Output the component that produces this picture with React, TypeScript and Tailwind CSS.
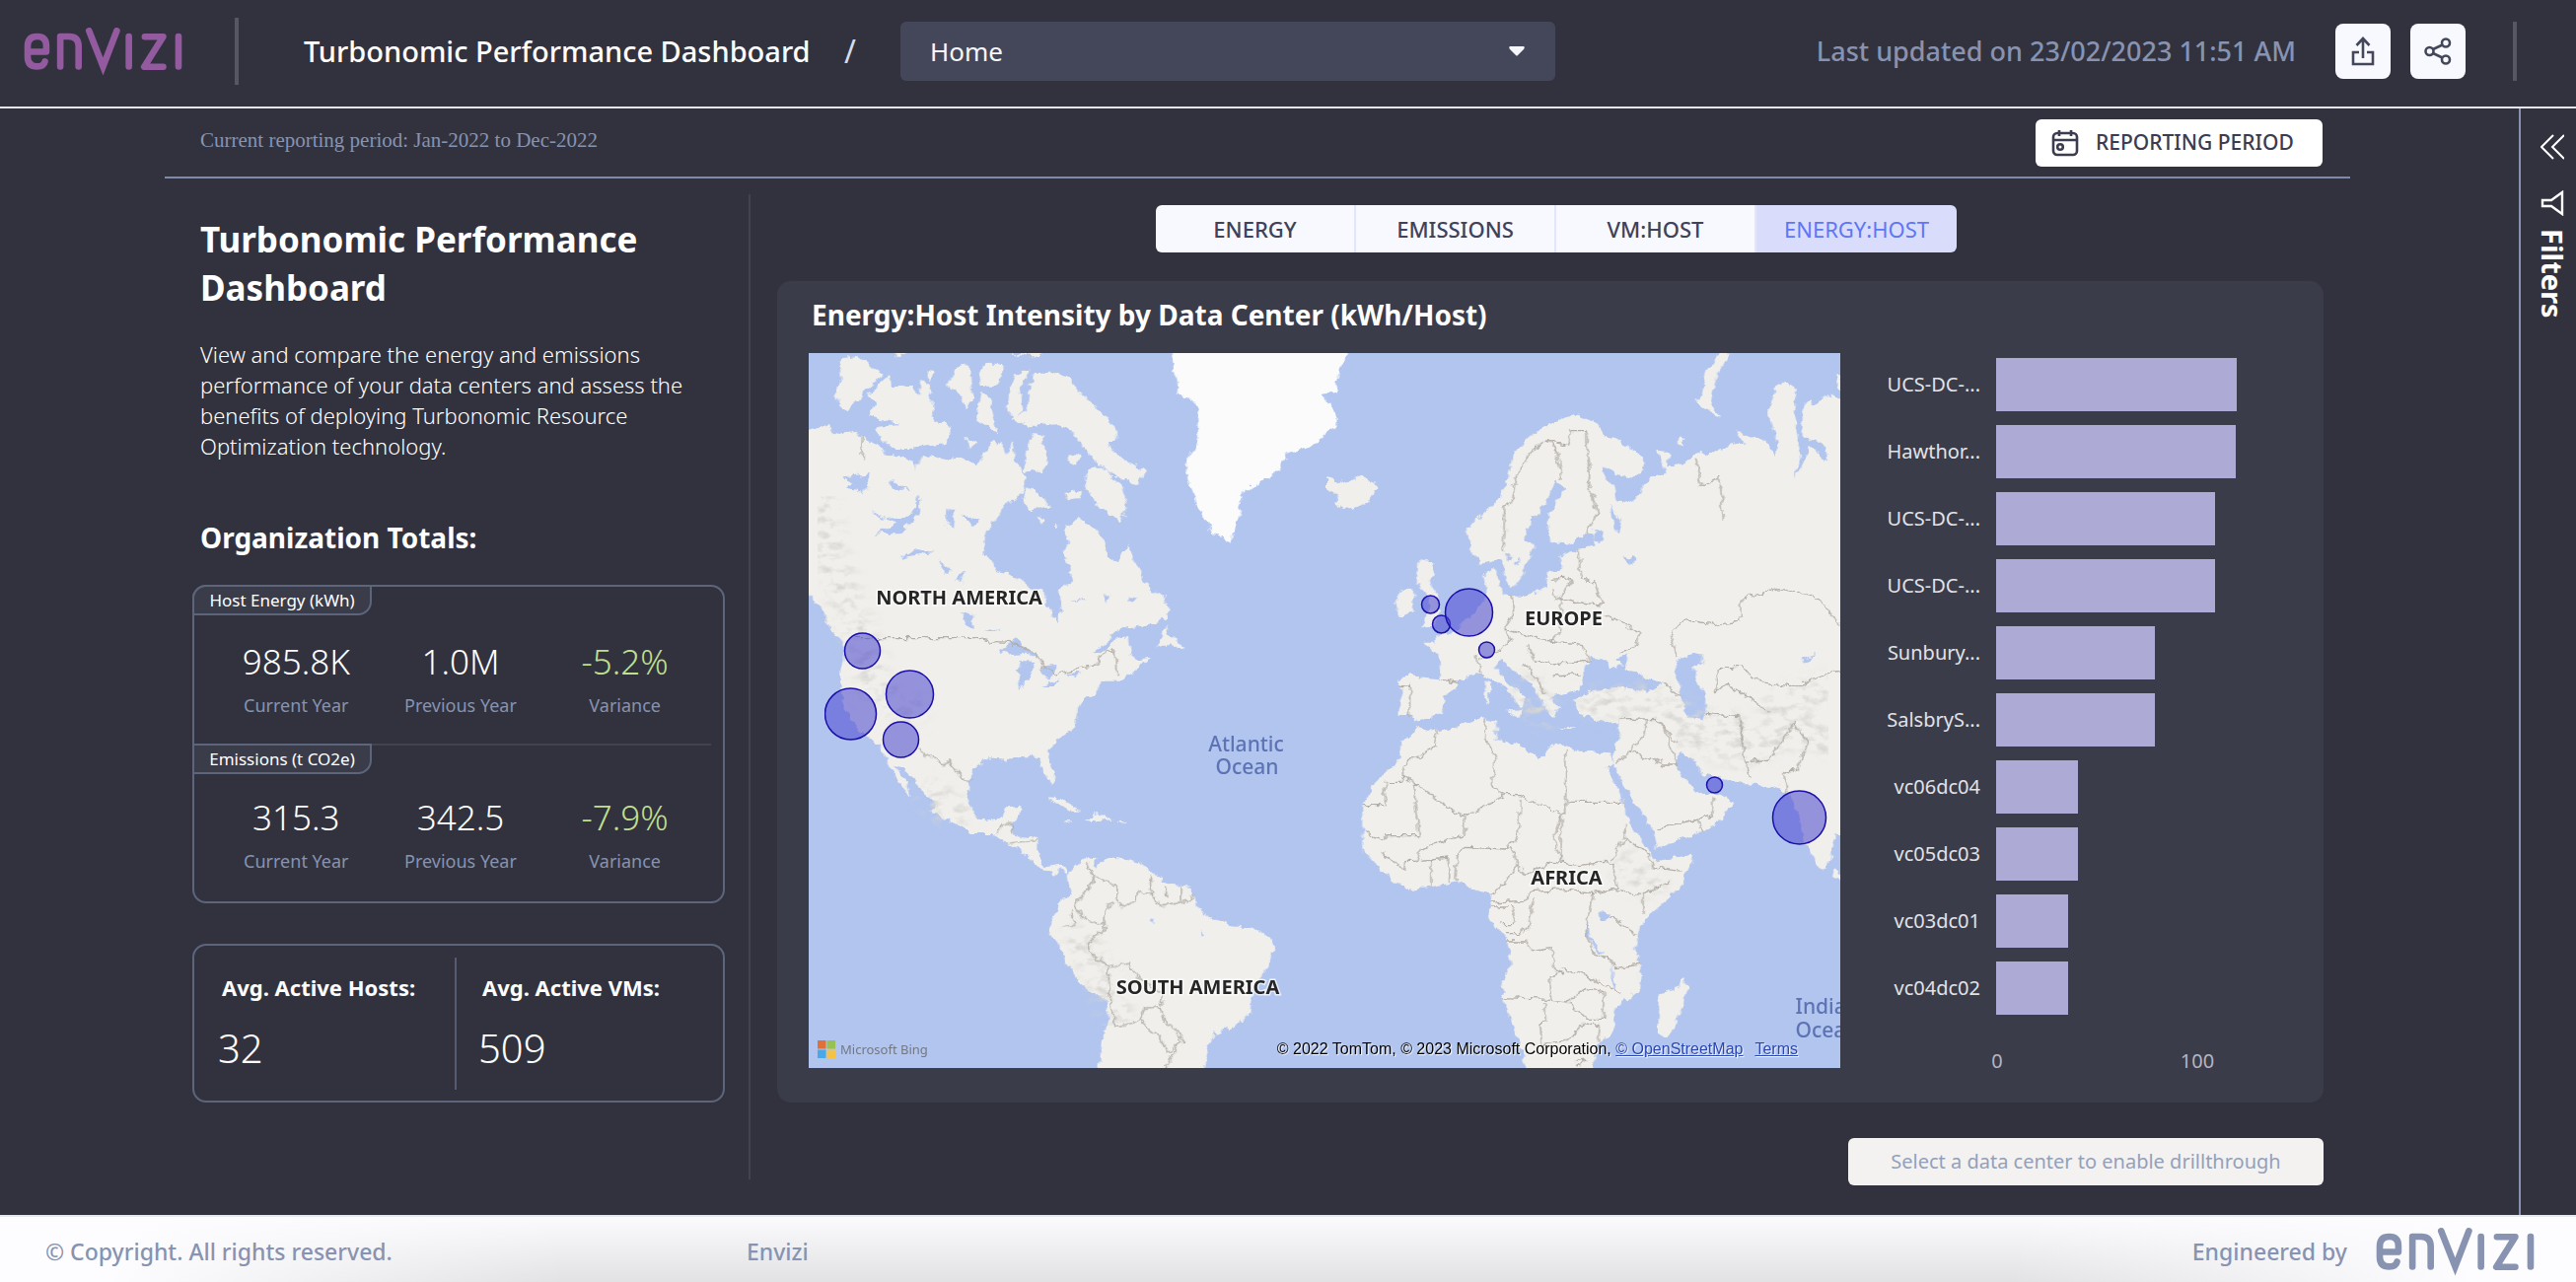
import React from "react";

const sans = "font-['Noto_Sans','Open_Sans',sans-serif]";

function Logo({ className }: { className: string }) {
  return (
    <svg viewBox="778 313 482 148" className={className} fill="none" stroke="currentColor" strokeWidth="20" strokeLinecap="round" strokeLinejoin="round" role="img" aria-label="Envizi">
      <path d="M790 387H845V368Q845 340 817 340Q788 340 788 370V402Q788 432 817 432Q838 432 841 417" />
      <path d="M888 432V340H914Q944 340 944 370V432" />
      <path d="M976 323L1019 432L1061 323" strokeLinejoin="miter" strokeMiterlimit="6" />
      <path d="M1098 340V432M1250 340V432" />
      <path d="M1147 341H1203L1145 433H1203" />
    </svg>
  );
}

function ExportIcon() {
  return (
    <svg viewBox="0 0 24 30" className="h-[30px] w-6" fill="none" stroke="currentColor" strokeWidth="2.6">
      <path d="M12 22V2M5.500 9L12 2L18.500 9M8 16H2V28H22V16H16" />
    </svg>
  );
}

function ShareIcon() {
  return (
    <svg viewBox="0 0 28 28" className="size-7" fill="none" stroke="currentColor" strokeWidth="2.6">
      <circle cx="5.500" cy="14" r="4" />
      <circle cx="22" cy="5.500" r="4" />
      <circle cx="22" cy="22.500" r="4" />
      <path d="M9 12L18.500 7.500M9 16L18.500 20.500" />
    </svg>
  );
}

function CalendarIcon() {
  return (
    <svg viewBox="0 0 28 28" className="size-7" fill="none" stroke="currentColor" strokeWidth="2.6">
      <rect x="2" y="4" width="24" height="22" rx="4" />
      <path d="M2 11H26M8 1V7M20 1V7" />
      <circle cx="9" cy="18" r="2.800" />
    </svg>
  );
}

const arcticIslands = [
  "M200 285L250 275L325 330L280 370L225 440L185 400L205 340Z",
  "M280 390L340 335L350 370L410 365L430 400L430 345L455 355L470 470L520 490L500 540L400 555L350 555L300 500L310 485L370 480L285 455L305 420Z",
  "M525 310L570 300L575 370L580 400L555 430L540 385L505 360Z",
  "M600 310L620 295L670 305L650 365L605 365Z",
  "M605 380L625 400L650 510L590 470Z",
  "M745 312L700 330L682 380L680 430L690 465L725 440L715 400L720 350Z",
  "M760 320L800 320L855 340L870 370L930 430L990 500L990 540L960 540L1000 580L1070 625L1045 670L960 625L900 560L860 500L820 480L740 490L685 465L735 440L740 360Z",
  "M905 620L940 610L1000 660L1020 730L995 780L950 740L900 680Z",
  "M840 690L890 680L880 705L850 710Z",
  "M730 560L750 510L780 520L790 600L770 630L725 620Z",
  "M730 670L760 690L800 730L740 745L722 720Z",
  "M860 570L885 580L870 605L850 595Z",
  "M765 762L785 770L770 782ZM812 780L822 790L814 800ZM560 520L595 540L570 555ZM445 320L472 325L455 348Z",
  "M340 262L400 262L365 280ZM680 262L800 262L760 276Z",
  "M1100 1160L1130 1090L1140 1120L1185 1170L1160 1165L1140 1150Z",
];

const northAmerica =
  "M100 500L160 485L200 515L240 500L280 530L320 545L335 575L400 585L420 615L440 570L500 590L555 580L590 605L605 580L640 530L665 545L675 580L690 530L700 590L735 640L720 690L690 715L660 740L640 775L615 810L610 880L635 900L650 930L690 940L740 975L780 985L790 1030L820 1085L832 1050L825 990L860 960L860 920L835 880L850 840L840 790L880 770L920 790L950 830L960 880L990 900L1020 850L1040 900L1060 940L1080 980L1120 1010L1140 1050L1130 1070L1080 1090L1010 1100L975 1120L950 1150L920 1180L950 1170L990 1130L1020 1125L1025 1180L1060 1200L1085 1195L1034 1232L1000 1262L205 1262L205 1230L215 1160L200 1130L165 1085L150 1040L100 990Z";

const greenland =
  "M1140 250L1165 390L1215 420L1220 520L1185 600L1190 650L1230 760L1260 810L1310 840L1330 780L1350 680L1440 630L1475 570L1540 550L1610 490L1610 450L1570 390L1610 380L1615 320L1655 250Z";

const centralAmerica =
  "M121 -6L118 40L125 90L150 150L190 200L230 230L250 270L275 320L300 360L320 382L305 330L275 285L290 290L330 330L350 370L385 400L380 430L430 460L500 495L545 495L600 530L640 550L660 580L700 605L725 620L745 604L765 622L765 600L740 588L700 595L680 560L680 510L610 500L600 470L625 450L632 410L590 415L580 445L530 460L500 440L480 390L485 340L495 300L530 270L590 275L600 262L650 262L685 270L695 310L720 350L730 330L715 280L710 240L740 210L785 170L790 130L810 90L855 60L860 30L950 -6Z";

const southAmerica =
  "M765 620L770 680L735 720L720 760L715 800L745 840L760 890L800 950L870 1000L880 1060L865 1120L850 1230L1150 1230L1160 1150L1180 1105L1260 1070L1285 1040L1290 980L1330 900L1352 850L1345 815L1290 780L1220 770L1190 750L1150 745L1120 690L1115 660L1060 650L1010 620L975 585L880 565L845 600L845 565L800 575Z";

const eurasia =
  "M670 270L750 240L805 265L830 300L870 315L940 370L945 410L905 440L830 400L835 430L860 465L870 500L900 510L935 480L960 430L1005 420L985 350L1020 355L1010 400L1060 390L1100 350L1130 360L1200 330L1225 330L1210 290L1290 320L1320 370L1325 330L1300 235L1320 160L1350 140L1380 165L1370 235L1390 370L1370 430L1395 400L1410 330L1450 370L1465 380L1455 330L1395 310L1395 220L1415 195L1460 240L1430 210L1470 180L1520 200L1520 1260L870 1260L885 1200L880 1175L820 1180L760 1150L745 1110L800 1080L870 1070L950 1085L1000 1060L950 1040L890 1010L900 970L860 985L885 1000L850 1015L830 985L795 980L770 1030L765 1080L720 1090L680 1100L705 1130L690 1165L660 1130L640 1080L600 1040L545 990L520 1010L560 1060L610 1105L595 1135L560 1080L500 1040L470 1030L410 1050L420 1070L380 1100L370 1150L300 1175L285 1155L250 1155L265 1090L245 1050L265 1035L365 1045L365 990L350 960L315 935L350 935L370 905L400 910L440 870L500 790L490 730L520 705L540 760L545 790L590 795L640 780L665 770L670 720L715 715L705 670L760 650L810 640L800 610L760 610L735 635L680 630L670 560L700 500L720 460L690 445L665 520L620 560L610 620L635 640L600 730L575 765L555 750L540 680L480 695L455 650L440 590L530 500L560 440L575 360L620 310Z";

const africa =
  "M300 170L350 185L490 145L525 155L525 210L580 225L650 265L690 220L760 245L850 250L860 280L835 290L860 340L885 400L890 440L920 490L960 545L975 580L1085 560L1080 590L1040 670L960 745L930 790L920 850L935 900L935 965L860 1030L865 1090L820 1130L790 1230L620 1230L580 1100L545 1000L540 960L570 890L555 820L505 760L515 680L455 665L420 640L340 655L275 668L200 610L145 545L145 410L180 340L250 270L255 220Z";

const southAsia =
  "M870 150L1520 150L1520 490L1485 500L1480 560L1455 605L1440 600L1400 510L1385 440L1355 370L1300 350L1220 345L1110 310L1080 265L1045 250L1035 290L1075 350L1120 380L1145 370L1205 400L1150 470L1060 510L985 540L970 490L930 420L880 330L860 290L860 230L880 190Z";

const sites = [
  { x: 875, y: 660, r: 18 },
  { x: 923, y: 704, r: 24 },
  { x: 863, y: 724, r: 26 },
  { x: 914, y: 750, r: 18 },
  { x: 1451, y: 613, r: 9 },
  { x: 1462, y: 633, r: 9 },
  { x: 1490, y: 621, r: 24 },
  { x: 1508, y: 659, r: 8 },
  { x: 1739, y: 796, r: 8 },
  { x: 1825, y: 829, r: 27 },
];

const water = "#b1c5ef";
const NW = "translate(780 270) scale(.35714 .33333)";
const NE = "translate(1330 340) scale(.35714 .33333)";
const SW = "translate(810 680) scale(.35714 .33333)";
const SE = "translate(1330 680) scale(.35714 .33333)";

function WorldMap() {
  return (
    <svg viewBox="820 358 1047 725" preserveAspectRatio="xMidYMid slice" className="block h-[725px] w-full" role="img" aria-label="Data centers by energy to host intensity">
      <defs>
        <filter id="coast" x="-2%" y="-2%" width="104%" height="104%">
          <feTurbulence type="fractalNoise" baseFrequency="0.11" numOctaves="3" seed="4" result="n" />
          <feDisplacementMap in="SourceGraphic" in2="n" scale="9" xChannelSelector="R" yChannelSelector="G" />
          <feGaussianBlur stdDeviation="0.6" />
        </filter>
        <filter id="relief" x="0" y="0" width="100%" height="100%">
          <feTurbulence type="fractalNoise" baseFrequency="0.07 0.12" numOctaves="4" seed="9" result="n" />
          <feColorMatrix in="n" type="matrix" values="0 0 0 0 .68  0 0 0 0 .67  0 0 0 0 .64  3 0 0 0 -1.4" result="g" />
          <feGaussianBlur in="SourceGraphic" stdDeviation="7" result="s" />
          <feComposite in="g" in2="s" operator="in" />
        </filter>
      </defs>
      <rect x="820" y="358" width="1047" height="725" fill={water} />
      <g filter="url(#coast)">
        <g fill="#f0efeb">
          <g transform={NW}>
            <path d={northAmerica} />
            {arcticIslands.map((d) => (
              <path key={d} d={d} />
            ))}
            <path d={greenland} fill="#fbfbfb" />
          </g>
          <g transform={SW}>
            <path d={centralAmerica} />
            <path d={southAmerica} />
            <path d="M705 388L740 390L800 425L770 425L740 405ZM810 455L850 435L888 455L850 462ZM755 458L780 460L765 465ZM905 458L930 459L915 465Z" />
          </g>
          <g transform={NE}>
            <path d={eurasia} />
            <path d="M45 430L80 450L150 425L190 465L165 505L115 532L70 510L80 490L45 465Z" />
            <path d="M305 685L345 690L350 730L335 745L360 790L365 830L350 880L310 890L330 850L335 800L300 750ZM260 770L290 770L290 840L250 860L240 810Z" />
            <path d="M1165 50L1190 50L1150 130L1135 200L1165 250L1110 220L1090 205L1110 180L1125 110ZM1045 310L1060 315L1055 335L1042 328ZM1495 115L1510 115L1510 170L1495 155Z" />
            <path d="M497 1050L508 1060L505 1120L495 1115ZM555 1145L600 1140L590 1165ZM705 1194L750 1195L730 1202Z" />
          </g>
          <g transform={SE}>
            <path d={africa} />
            <path d={southAsia} />
            <path d="M1060 935L1070 965L1050 1040L1010 1120L985 1100L990 980L1040 960ZM1485 600L1510 620L1510 640L1480 625Z" />
          </g>
        </g>
        <g fill={water}>
          <path transform={NE} d="M1040 990L1080 965L1110 970L1110 1000L1085 1010L1100 1060L1120 1100L1115 1170L1075 1165L1050 1110L1045 1060L1030 1020ZM890 670L920 680L905 700ZM850 520L880 560L875 610L860 580ZM800 590L830 600L825 630L805 625ZM1390 985L1440 972L1400 1000ZM550 665L570 670L560 690ZM575 690L590 680L580 705Z" />
          <path transform={NW} d="M655 1172L700 1135L765 1190L735 1178L690 1182ZM705 1262L715 1200L762 1203L735 1262ZM770 1218L815 1212L800 1262L775 1240ZM215 640L290 630L270 690L220 680L240 660ZM290 740L320 770L400 760L430 700L430 760L370 810L300 815L360 785ZM370 890L420 860L470 870L410 880ZM510 740L525 740L520 800L505 790ZM485 890L515 930L500 935ZM530 950L560 925L545 965ZM540 1050L580 1060L580 1105L560 1090ZM340 650L400 680L360 680ZM950 990L970 1000L960 1020ZM1020 1005L1045 1010L1020 1020ZM550 760L600 770L580 790ZM610 1110L660 1100L640 1110ZM850 1020L900 1010L890 1018Z" />
          <path transform={SW} d="M622 0L640 0L642 45L628 56ZM690 45L745 30L725 45ZM755 10L800 5L785 18ZM1000 755L1015 760L1010 768ZM1145 790L1155 800L1148 803Z" />
          <path transform={SE} d="M815 735L850 740L840 765L820 765ZM785 750L792 810L830 860L815 858L780 800ZM850 890L860 940L868 980L855 950Z" />
        </g>
      </g>
      <g filter="url(#relief)" fill="none" stroke="#000" strokeWidth="90" strokeLinecap="round" strokeLinejoin="round">
        <path transform={NW} d="M140 700L180 900L230 1040L290 1220" />
        <path transform={SW} d="M200 60L320 120M380 380L440 430M800 820L860 920L910 1080" />
        <path transform={NE} d="M1010 1120L1100 1190L1200 1190M1320 1130L1460 1080M800 1120L950 1110" />
        <path transform={SE} d="M1080 200L1200 250L1380 180L1470 220M900 600L960 640M660 130L620 60" />
      </g>
      <g fill="none" stroke="#b3aea7" strokeLinejoin="round" strokeWidth="4" filter="url(#coast)">
        <path transform={NW} d="M240 1130L600 1130L650 1145L700 1150L750 1175L780 1215L820 1245L880 1220L930 1215L955 1170L985 1170L990 1240M265 520V590" />
        <path transform={SW} d="M340 240L410 285L430 275L470 335L495 338M570 500L580 470L605 465V495M600 525L680 515M840 630L870 640L900 650L900 690L920 720L955 700L960 680L1000 670L1020 715L1110 700L1120 680M840 640L780 720L840 770L870 770M870 720L900 710M870 720L870 790L820 830L830 870L860 880L880 900L935 885L950 920L1030 980L1035 1020M880 900L885 1000L900 1080L970 1065L980 1030L1030 1025L1040 1070L1080 1100L1090 1130L1050 1160L1030 1120L970 1065M1085 1130L1040 1210M1000 620L1000 680M1045 655L1045 690M1085 655L1085 700M820 580L840 640M770 730L790 770L750 780" />
        <path transform={NE} d="M545 660L550 520L570 510L580 440L605 380L630 350L670 320L700 360L710 440M670 320L730 335L740 290L780 290L780 320L790 390L790 460L812 540L780 610M760 650L765 745L805 750L830 820L740 810L700 800L690 770M680 745L740 740L710 790L705 900L690 930L640 920L550 890L575 850L570 790M550 890L570 930L530 960L480 990M690 930L770 940L790 990L700 1000L640 990L610 940M690 1035L765 1030M600 1000L640 1040L660 1090M830 850L930 900L925 950L880 965M1040 980L1020 910L1060 865L1150 880L1215 870L1225 800L1330 770L1440 800L1500 880M1152 1080L1150 1010L1220 1010L1290 1060L1360 1070L1500 1020M1150 1080L1180 1060L1240 1100L1300 1150M1095 380L1110 460L1160 430L1170 560M280 1160L280 1070L250 1065M365 1045L420 1060M470 970L480 1030M1000 1060L1050 1100M875 1170L980 1165L1040 1240M1120 1150L1215 1160L1225 1250" />
        <path transform={SE} d="M350 185L360 230L290 270L260 290L260 340L210 340L210 410L145 410M260 320L430 445L550 380L515 350L520 260L490 200L495 150M290 350L305 500L215 500L215 515L150 490M290 350L310 350M438 445L435 500L390 515L310 545L300 580L270 580L265 610L200 550M550 380L595 380L710 435V580L690 520L710 435M723 245V430L710 435M725 400H885M595 390L590 500L560 540L430 535L415 570L410 640M310 580L390 570L390 640M340 575L340 655M570 540L585 590L555 640L515 680M585 590L610 620L690 580L760 590L830 580L860 590L870 660L800 680L720 665L630 670L600 700L510 705M630 690L620 770L590 800L550 800M510 720L575 720L575 770L540 770M555 825L610 825L630 855L680 845L690 910L710 920L680 930L680 1000L545 995M710 905L780 925L830 960L880 980M680 1000L730 1005L780 970L830 980L830 1060L780 1060L730 1010M665 1010L665 1070L650 1075L655 1140L720 1130L780 1070L820 1080L815 1130M750 1190L780 1185L770 1205L750 1200M800 680L790 750L780 790L800 860L850 880L860 905L935 895M850 750L920 800M860 670L945 680L945 740M945 680L1020 640M850 580L890 510L960 560L970 600L1050 610M885 510L895 470M900 240L1000 285L1040 285L1020 220L990 150M950 150L945 200L870 280M980 480L1100 450L1140 440L1145 380M1100 450L1110 490M1220 150L1230 280L1250 320M1230 280L1300 270L1370 160L1410 220L1380 300L1345 310L1350 370" />
      </g>
      <g fill="#4b46cf" fillOpacity=".55" stroke="#1a0fa8" strokeWidth="1.500">
        {sites.map((s) => (
          <circle key={`${s.x}-${s.y}`} cx={s.x} cy={s.y} r={s.r} />
        ))}
      </g>
      <g className={sans} fontSize="20" fontWeight="700" fill="#262626" stroke="#fff" strokeOpacity=".7" strokeWidth="3" paintOrder="stroke" textAnchor="middle">
        <text x="973" y="613">NORTH AMERICA</text>
        <text x="1586" y="634">EUROPE</text>
        <text x="1589" y="897">AFRICA</text>
        <text x="1215" y="1008">SOUTH AMERICA</text>
      </g>
      <g className={sans} fontSize="21" fontWeight="500" fill="#5d73b3">
        <text x="1264" y="762" textAnchor="middle">Atlantic</text>
        <text x="1265" y="785" textAnchor="middle">Ocean</text>
        <text x="1821" y="1028">Indian</text>
        <text x="1821" y="1052">Ocean</text>
      </g>
    </svg>
  );
}

const bars = [
  { name: "UCS-DC-...", value: 119.5 },
  { name: "Hawthor...", value: 119 },
  { name: "UCS-DC-...", value: 109 },
  { name: "UCS-DC-...", value: 109 },
  { name: "Sunbury...", value: 79 },
  { name: "SalsbryS...", value: 79 },
  { name: "vc06dc04", value: 40.6 },
  { name: "vc05dc03", value: 40.6 },
  { name: "vc03dc01", value: 36 },
  { name: "vc04dc02", value: 36 },
];
const axisMax = 150;

function BarChart() {
  return (
    <div className="w-[465px] shrink-0 pt-[5px] pr-[1px]">
      <ul className="flex flex-col gap-[14px]">
        {bars.map((b, i) => (
          <li key={i} className="flex h-[54px] items-center gap-4">
            <span className="w-[142px] text-right text-[20px] text-[#e2e2e6]">{b.name}</span>
            <span className="h-full flex-1">
              <span className="block h-full bg-[#adabd5]" style={{ width: `${(b.value / axisMax) * 100}%` }} />
            </span>
          </li>
        ))}
      </ul>
      <div className="mt-[34px] flex pl-[148px] text-[20px] leading-[26px] text-[#b4b5c0]">
        <span className="w-[22px] text-center">0</span>
        <span className="ml-[172px] w-10 text-center">100</span>
      </div>
    </div>
  );
}

function Totals({ title, values, tab, gap }: { title: string; values: string[]; tab: string; gap: string }) {
  const labels = ["Current Year", "Previous Year", "Variance"];
  return (
    <section className="h-[161px]">
      <h3 className={`${tab} flex h-[31px] w-[182px] items-center justify-center rounded-br-[14px] border-2 border-[#5d657d] bg-[#3b3c4a] text-[17px] text-white`}>{title}</h3>
      <dl className={`${gap} grid grid-cols-3 pr-4 pl-5 text-center`}>
        {values.map((v, i) => (
          <div key={v} className="flex flex-col-reverse gap-2">
            <dt className="text-lg leading-6 text-[#8793b0]">{labels[i]}</dt>
            <dd className={i === 2 ? "text-[35px] leading-[48px] font-light text-[#bfdf8f]" : "text-[35px] leading-[48px] font-light text-white"}>{v}</dd>
          </div>
        ))}
      </dl>
    </section>
  );
}

export default function App() {
  const tabs = ["ENERGY", "EMISSIONS", "VM:HOST", "ENERGY:HOST"];
  return (
    <div className={`${sans} flex min-h-screen flex-col bg-[#31323e] text-white`}>
      <header className="flex h-[110px] items-center border-b-2 border-[#e4e5ea] pb-1 pl-6">
        <Logo className="h-[49px] w-[161px] text-[#935a9f]" />
        <span className="ml-[53px] h-[68px] w-1 bg-[#555763]" />
        <h1 className="ml-[66px] w-[524px] text-[29px] leading-10 font-medium whitespace-nowrap">Turbonomic Performance Dashboard</h1>
        <span className="ml-6 text-[32px] leading-10 text-[#d5dcea]">/</span>
        <div className="relative ml-[45px] w-[664px]">
          <select aria-label="Page" className="h-[60px] w-full appearance-none rounded-md bg-[#44475a] pr-12 pl-[30px] text-[26px] text-[#f5f6fb]">
            <option>Home</option>
          </select>
          <svg viewBox="0 0 16 10" className="pointer-events-none absolute top-[25px] right-[31px] h-[10px] w-4" fill="#f5f6fb">
            <path d="M1 0H15Q16.500 1 15 3L9 9Q8 10 7 9L1 3Q-.5 1 1 0Z" />
          </svg>
        </div>
        <p className="ml-auto text-[27px] leading-10 font-medium whitespace-nowrap text-[#8793b0]">Last updated on 23/02/2023 11:51 AM</p>
        <button aria-label="Export" className="ml-[40px] flex size-14 items-center justify-center rounded-lg bg-[#f8f9ff] text-[#44475a]">
          <ExportIcon />
        </button>
        <button aria-label="Share" className="ml-5 flex size-14 items-center justify-center rounded-lg bg-[#f8f9ff] text-[#44475a]">
          <ShareIcon />
        </button>
        <span className="mr-[60px] ml-12 h-[60px] w-1 bg-[#555763]" />
      </header>

      <div className="flex flex-1">
        <main className="flex flex-1 flex-col pr-[171px] pl-[167px]">
          <div className="flex h-[71px] items-center justify-between border-b-2 border-[#7d8aa8] pr-7 pb-[3px] pl-9">
            <p className="font-['Liberation_Serif',serif] text-[21px] text-[#8793b0]">Current reporting period: Jan-2022 to Dec-2022</p>
            <button className="mt-1 flex h-12 w-[291px] items-center gap-[17px] rounded-md bg-white pl-4 text-[21px] font-medium text-[#3b3c4f]">
              <CalendarIcon />
              REPORTING PERIOD
            </button>
          </div>

          <div className="flex flex-1">
            <aside className="mt-4 mb-9 w-[594px] shrink-0 border-r-2 border-[#41434f] pt-[21px] pr-6 pl-7">
              <h2 className="pl-2 text-[35px] leading-[49px] font-bold">
                Turbonomic Performance
                <br />
                Dashboard
              </h2>
              <p className="mt-[28px] pl-2 text-[22px] leading-[31px] font-light whitespace-nowrap">
                View and compare the energy and emissions
                <br />
                performance of your data centers and assess the
                <br />
                benefits of deploying Turbonomic Resource
                <br />
                Optimization technology.
              </p>
              <h2 className="mt-[58px] pl-2 text-[28px] leading-[38px] font-bold">Organization Totals:</h2>
              <div className="mt-[29px] h-[323px] w-[540px] rounded-[14px] border-2 border-[#5d657d]">
                <Totals title="Host Energy (kWh)" values={["985.8K", "1.0M", "-5.2%"]} tab="-mt-0.5 -ml-0.5 rounded-tl-[14px]" gap="mt-[23px]" />
                <div className="mx-3 border-t-2 border-[#41434f]" />
                <Totals title="Emissions (t CO2e)" values={["315.3", "342.5", "-7.9%"]} tab="-mt-0.5 -ml-0.5" gap="mt-5" />
              </div>
              <div className="mt-[41px] flex h-[161px] w-[540px] items-center rounded-[14px] border-2 border-[#5d657d]">
                <div className="w-[264px] pl-7">
                  <h3 className="text-[22px] leading-[30px] font-bold">Avg. Active Hosts:</h3>
                  <p className="mt-5 -ml-1 text-[40px] leading-[54px] font-light">32</p>
                </div>
                <div className="h-[134px] w-0.5 bg-[#555c72]" />
                <div className="pl-[26px]">
                  <h3 className="text-[22px] leading-[30px] font-bold">Avg. Active VMs:</h3>
                  <p className="mt-5 -ml-1 text-[40px] leading-[54px] font-light">509</p>
                </div>
              </div>
            </aside>

            <section className="ml-[27px] flex flex-1 flex-col pt-[27px] pr-[27px]">
              <div className="ml-3 grid w-[812px] grid-cols-4 self-center overflow-hidden rounded-md">
                {tabs.map((t, i) => (
                  <button
                    key={t}
                    className={
                      i === 3
                        ? "h-12 bg-[#d9ddfb] text-[22px] text-[#5f76f6]"
                        : "h-12 border-r-2 border-[#e3e5fb] bg-[#f8f9ff] text-[22px] font-medium text-[#3f4259]"
                    }
                  >
                    {t}
                  </button>
                ))}
              </div>
              <div className="mt-[29px] rounded-[14px] bg-[#3b3c4a] pt-[15px] pr-[25px] pb-[29px] pl-8">
                <h2 className="pl-[3px] text-[28px] leading-[38px] font-bold">Energy:Host Intensity by Data Center (kWh/Host)</h2>
                <div className="mt-5 flex">
                  <div className="relative min-w-0 flex-1">
                    <WorldMap />
                    <div className="absolute bottom-4 left-[9px] flex items-center gap-[5px]">
                      <svg viewBox="0 0 18 18" className="size-[18px]">
                        <path fill="#e0703a" d="M0 0H8.500V8.500H0Z" />
                        <path fill="#97c252" d="M9.500 0H18V8.500H9.500Z" />
                        <path fill="#4ba8e8" d="M0 9.500H8.500V18H0Z" />
                        <path fill="#f4c345" d="M9.500 9.500H18V18H9.500Z" />
                      </svg>
                      <span className="text-[13px] leading-[18px] text-[#737884]">Microsoft Bing</span>
                    </div>
                    <p className="absolute right-[43px] bottom-4 font-['Liberation_Sans',sans-serif] text-base leading-[18px] whitespace-nowrap text-black [text-shadow:1px_1px_1px_white]">
                      © 2022 TomTom, © 2023 Microsoft Corporation,{" "}
                      <a href="#osm" className="text-[#2a46b0] underline">© OpenStreetMap</a>
                      <a href="#terms" className="ml-3 text-[#2a46b0] underline">Terms</a>
                    </p>
                  </div>
                  <BarChart />
                </div>
              </div>
              <button disabled className="mt-9 h-12 w-[482px] self-end rounded-md bg-[#f3f2f0] text-[20px] text-[#93a0bb]">
                Select a data center to enable drillthrough
              </button>
            </section>
          </div>
        </main>

        <aside className="flex w-[58px] shrink-0 flex-col items-center border-l-2 border-[#8793b0] pt-[26px] pl-2">
          <button aria-label="Expand filters">
            <svg viewBox="0 0 24 26" className="block h-[26px] w-6" fill="none" stroke="#fff" strokeWidth="2">
              <path d="M13 1L1 13L13 25M24 1L12 13L24 25" />
            </svg>
          </button>
          <svg viewBox="0 0 24 26" className="mt-[31px] h-[26px] w-6" fill="none" stroke="#fff" strokeWidth="2.4">
            <path d="M22 2V24L11 16H2V10H11Z" />
          </svg>
          <span className="mt-[13px] text-[29px] leading-8 font-bold [writing-mode:vertical-rl]">Filters</span>
        </aside>
      </div>

      <footer className="flex h-[68px] items-center border-t-2 border-[#e6e9f1] bg-[linear-gradient(to_right,#fdfdff_4%,transparent_22%,transparent_78%,#fdfdff_96%),linear-gradient(to_bottom,#fbfbfe,#e2e2e4)] pt-1 pr-[42px] pl-[46px] text-[23px] font-medium text-[#8793b0]">
        <p className="w-[711px]">© Copyright. All rights reserved.</p>
        <p>Envizi</p>
        <p className="ml-auto">Engineered by</p>
        <Logo className="ml-[29px] h-[49px] w-[161px] text-[#8793b0]" />
      </footer>
    </div>
  );
}
